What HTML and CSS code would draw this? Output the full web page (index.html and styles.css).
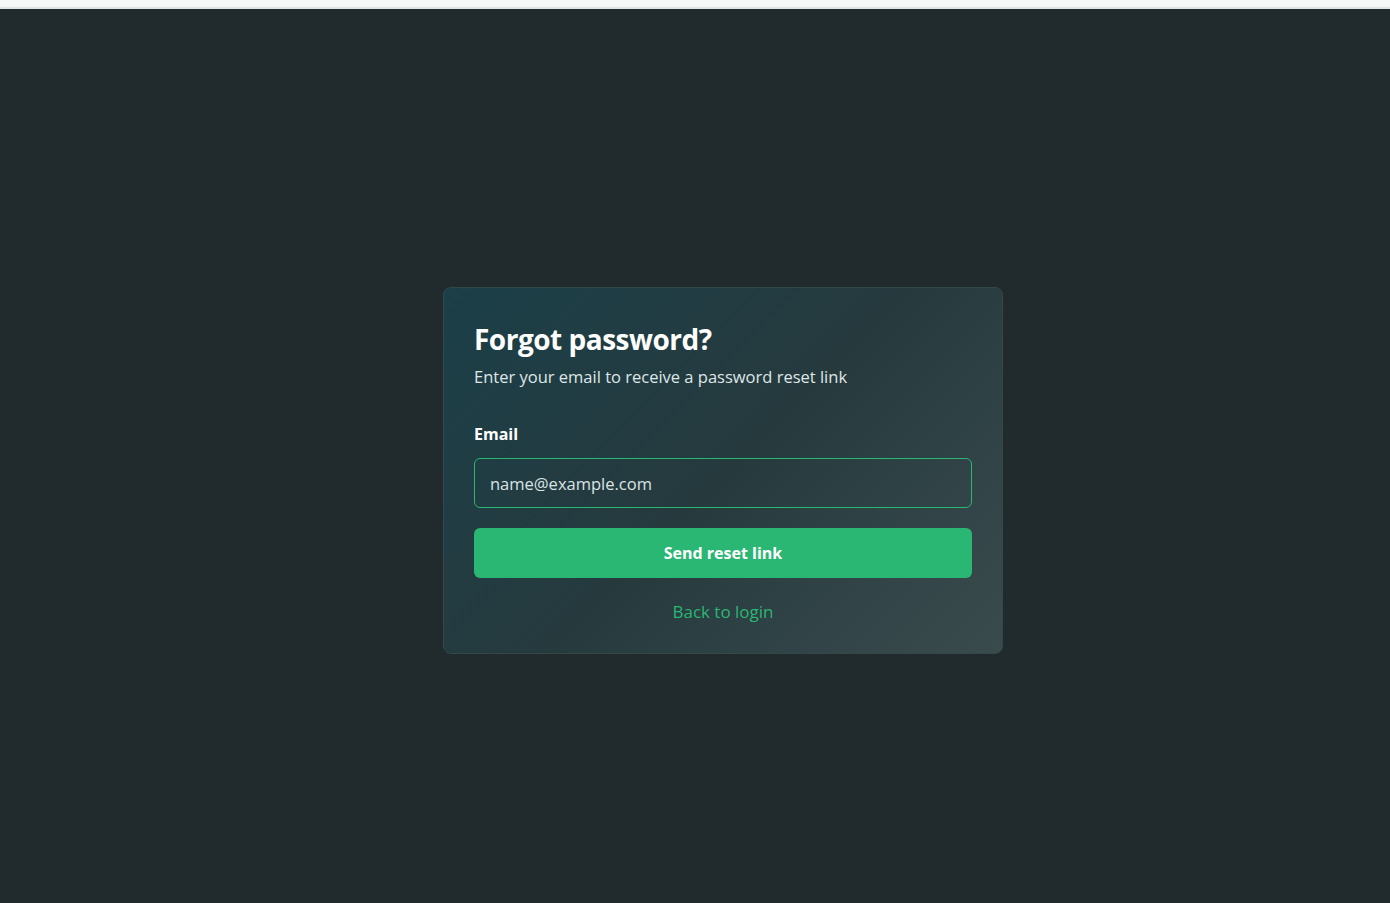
FILE: index.html
```html
<!DOCTYPE html>
<html lang="en">
<head>
<meta charset="utf-8">
<title>Forgot password</title>
<link rel="stylesheet" href="styles.css">
</head>
<body>
<div class="topbar"></div>
<main class="page">
  <section class="card">
    <h1 class="title">Forgot password?</h1>
    <p class="subtitle">Enter your email to receive a password reset link</p>
    <form class="form">
      <label class="label" for="email">Email</label>
      <input class="input" id="email" type="email" placeholder="name@example.com">
      <button class="button" type="button">Send reset link</button>
    </form>
    <a class="back" href="#">Back to login</a>
  </section>
</main>
</body>
</html>
```
FILE: styles.css
```css
* { box-sizing: border-box; }
html, body { margin: 0; padding: 0; height: 100%; }
body {
  background: #212a2c;
  font-family: "Open Sans", "Noto Sans", sans-serif;
  color: #ffffff;
  display: flex;
  flex-direction: column;
}
.topbar {
  height: 9px;
  background: #f3f8f6;
  border-bottom: 2px solid #dce3e0;
  flex: none;
}
.page {
  flex: 1;
  display: flex;
  align-items: center;
  justify-content: center;
  padding: 29px 0 0 56px;
}
.card {
  width: 560px;
  border: 1px solid #34474b;
  border-radius: 8px;
  background: linear-gradient(135deg, #1b3f48 0%, #263a3e 50%, #3a4b4d 100%);
  padding: 31px 30px 29px 30px;
  display: flex;
  flex-direction: column;
}
.title {
  margin: 0;
  font-size: 28px;
  line-height: 40px;
  font-weight: 700;
  letter-spacing: -0.5px;
  color: #ffffff;
}
.subtitle {
  margin: 5px 0 0 0;
  font-size: 16.5px;
  line-height: 26px;
  color: #dfe6e6;
}
.form {
  display: flex;
  flex-direction: column;
  margin-top: 32px;
}
.label {
  font-size: 16px;
  line-height: 24px;
  font-weight: 700;
  color: #ffffff;
}
.input {
  margin-top: 12px;
  height: 50px;
  border: 1px solid #2ab673;
  border-radius: 6px;
  background: transparent;
  padding: 0 15px;
  font-family: inherit;
  font-size: 16.5px;
  color: #ffffff;
  outline: none;
}
.input::placeholder { color: #dbe3e3; opacity: 1; }
.button {
  margin-top: 20px;
  height: 50px;
  border: none;
  border-radius: 6px;
  background: #2ab673;
  color: #ffffff;
  font-family: inherit;
  font-size: 16px;
  font-weight: 700;
  cursor: pointer;
}
.back {
  margin-top: 22px;
  align-self: center;
  font-size: 17px;
  line-height: 24px;
  color: #2ab673;
  text-decoration: none;
}
```
